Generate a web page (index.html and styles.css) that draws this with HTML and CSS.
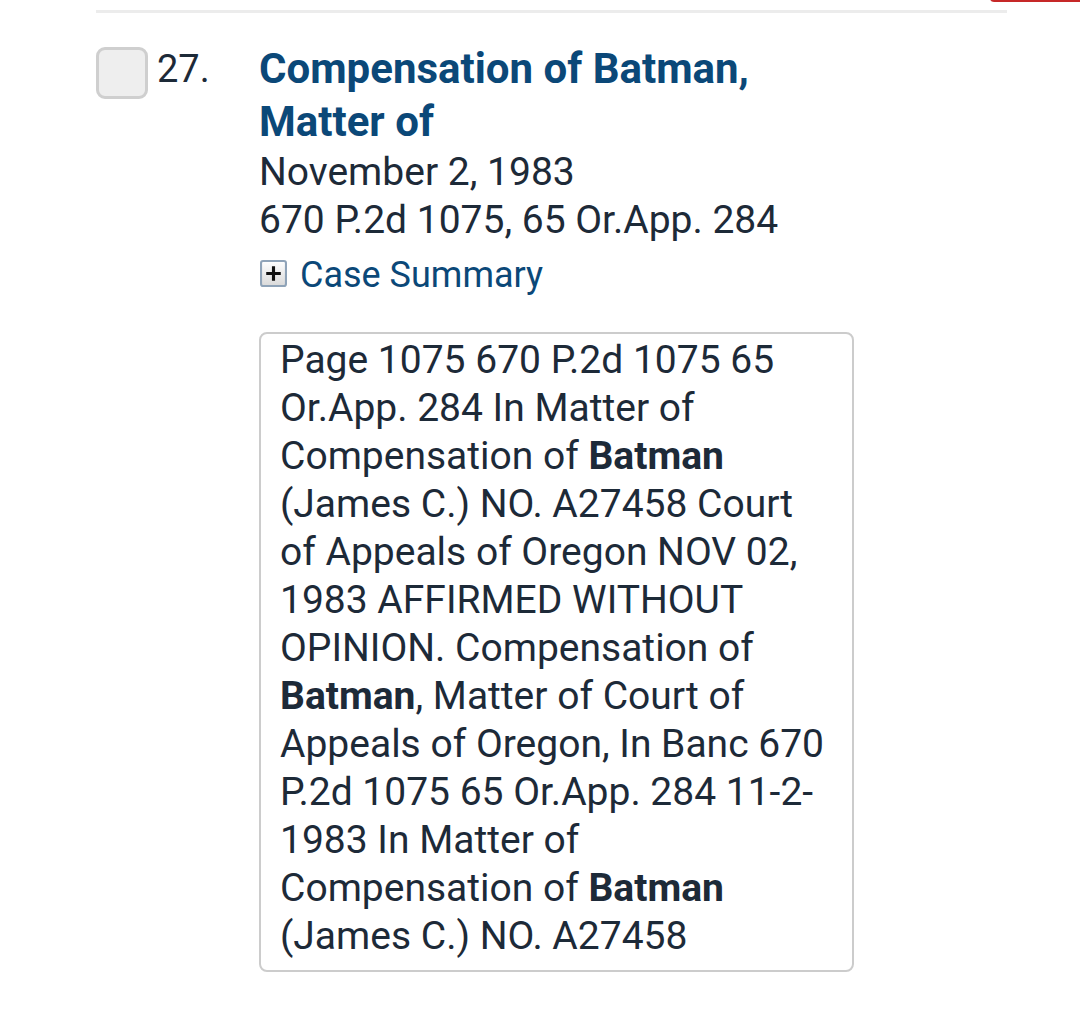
FILE: index.html
```html
<!DOCTYPE html>
<html lang="en">
<head>
  <meta charset="UTF-8">
  <title>Search results</title>
  <link rel="stylesheet" href="styles.css">
</head>
<body>
  <div class="top-tab"></div>

  <ol class="results">
    <li class="result">
      <span class="check"></span>
      <span class="num">27.</span>
      <div class="body">
        <a class="title" href="#">Compensation of Batman, Matter of</a>
        <div class="meta">November 2, 1983</div>
        <div class="meta">670 P.2d 1075, 65 Or.App. 284</div>
        <a class="summary" href="#">
          <svg class="plus" width="27" height="27" viewBox="0 0 26 26">
            <defs>
              <linearGradient id="pg" x1="0" y1="0" x2="0" y2="1">
                <stop offset="0" stop-color="#ffffff"/>
                <stop offset="1" stop-color="#d9d9d9"/>
              </linearGradient>
            </defs>
            <rect x="1" y="1" width="24" height="24" rx="2" fill="url(#pg)" stroke="#8fa3b8" stroke-width="2"/>
            <path d="M13 6v14M6 13h14" stroke="#111" stroke-width="3"/>
          </svg>
          Case Summary
        </a>
        <div class="snippet">
          Page 1075 670 P.2d 1075 65 Or.App. 284 In Matter of Compensation of <b>Batman</b> (James C.) NO. A27458 Court of Appeals of Oregon NOV 02, 1983 AFFIRMED WITHOUT OPINION. Compensation of <b>Batman</b>, Matter of Court of Appeals of Oregon, In Banc 670 P.2d 1075 65 Or.App. 284 11-2-1983 In Matter of Compensation of <b>Batman</b> (James C.) NO. A27458
        </div>
      </div>
    </li>
  </ol>
</body>
</html>
```

FILE: styles.css
```css
body {
  margin: 0;
  font-family: Roboto, "Liberation Sans", sans-serif;
  background-color: #ffffff;
  color: #1d2a38;
  position: relative;
}
.top-tab {
  position: absolute;
  top: -6px;
  right: -20px;
  width: 110px;
  height: 8px;
  background-color: #c62828;
  border-radius: 4px;
}
.results {
  list-style: none;
  margin: 10px 73px 0 96px;
  padding: 0;
  border-top: 3px solid #ececec;
}
.result {
  display: flex;
  align-items: flex-start;
  padding-top: 34px;
}
.check {
  flex: none;
  width: 46px;
  height: 46px;
  border: 3px solid #cfcfcf;
  border-radius: 9px;
  background-color: #eeeeee;
}
.num {
  flex: none;
  width: 102px;
  margin-left: 9px;
  font-size: 38px;
  line-height: 44px;
}
.body {
  flex: 1;
}
.title {
  display: block;
  width: 520px;
  font-size: 42px;
  line-height: 53px;
  font-weight: 700;
  color: #0b4878;
  text-decoration: none;
  margin-top: -5px;
}
.meta {
  font-size: 39px;
  line-height: 48px;
}
.summary {
  display: flex;
  align-items: center;
  gap: 13px;
  margin-top: 9px;
  font-size: 36px;
  line-height: 44px;
  color: #0b4878;
  text-decoration: none;
}
.plus {
  flex: none;
  margin-left: 1px;
  margin-top: -4px;
}
.snippet {
  width: 554px;
  margin-top: 35px;
  padding: 2px 18px 10px 19px;
  border: 2px solid #cccccc;
  border-radius: 8px;
  font-size: 39px;
  line-height: 48px;
}
.snippet b {
  font-weight: 700;
}
```
